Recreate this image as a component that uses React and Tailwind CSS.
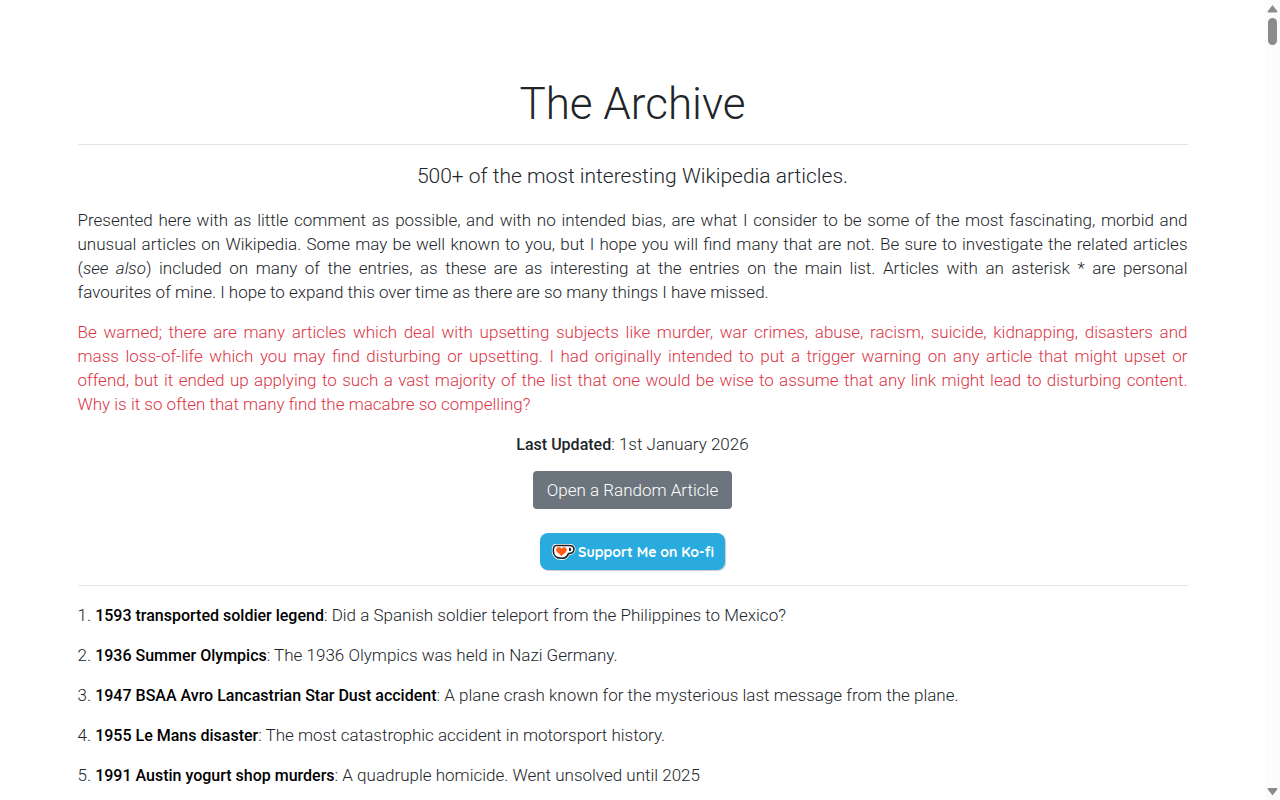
const articles = [
  { title: '1593 transported soldier legend', note: 'Did a Spanish soldier teleport from the Philippines to Mexico?' },
  { title: '1936 Summer Olympics', note: 'The 1936 Olympics was held in Nazi Germany.' },
  { title: '1947 BSAA Avro Lancastrian Star Dust accident', note: 'A plane crash known for the mysterious last message from the plane.' },
  { title: '1955 Le Mans disaster', note: 'The most catastrophic accident in motorsport history.' },
  { title: '1991 Austin yogurt shop murders', note: 'A quadruple homicide. Went unsolved until 2025' },
];

function KofiCup() {
  return (
    <svg viewBox="0 0 25 18" className="h-[18px] w-[25px]" aria-hidden="true">
      <path
        d="M4.500 1h14C22 1 24.500 3 24.500 6.200c0 3.400-2.600 5.600-6 5.800-1.400 3-4.200 5-8 5C5 17 .8 13.600.8 8 .8 3.500 1.800 1 4.500 1z"
        fill="#fff"
      />
      <path
        d="M5 2.500h13.200c2.900 0 4.800 1.400 4.800 3.700 0 2.600-2.200 4.300-5.500 4.400-1.100 2.900-3.600 4.700-7 4.700-4.900 0-8.200-2.900-8.200-7.300 0-3.900.6-5.500 2.700-5.500z"
        fill="#fff"
        stroke="#202020"
        strokeWidth="1.600"
      />
      <path d="M18 4.800v3.300c1.500 0 2.300-.6 2.300-1.700 0-1-.8-1.600-2.300-1.600z" fill="#202020" />
      <path
        d="M10.500 13 6.300 9.200C4.700 7.600 5 5.600 6.300 4.800c1.500-.9 3.200-.4 4.200.9 1-1.300 2.700-1.800 4.200-.9 1.300.8 1.600 2.800 0 4.400z"
        fill="#ff5a16"
      />
    </svg>
  );
}

function ScrollTrack() {
  return (
    <div className="flex w-[15px] shrink-0 flex-col items-center bg-[#fcfcfc] py-1" aria-hidden="true">
      <svg viewBox="0 0 11 9" className="h-[9px] w-[11px]">
        <path d="M5.500 1 10.500 7.500Q10.500 8.500 9.500 8.500h-8Q.5 8.500.5 7.500z" fill="#8b8b8b" />
      </svg>
      <div className="mt-[5px] h-[27px] w-[9px] rounded-full bg-[#8b8b8b]" />
      <svg viewBox="0 0 11 9" className="mt-auto h-[9px] w-[11px]">
        <path d="M5.500 8.500.5 2Q.5 1 1.500 1h8Q10.500 1 10.500 2z" fill="#8b8b8b" />
      </svg>
    </div>
  );
}

export default function App() {
  return (
    <div className="flex h-screen overflow-hidden bg-white font-['Roboto_Slab','Roboto',serif] text-[17px]/6 font-light text-[#212529]">
      <main className="min-w-0 flex-1 overflow-hidden">
        <div className="mx-auto max-w-[1140px] px-[15px] pt-20">
          <h1 className="text-center text-[44px]/[48px]">The Archive</h1>
          <hr className="my-4 border-black/10" />
          <p className="mb-4 text-center text-[21px]/[31px]">500+ of the most interesting Wikipedia articles.</p>
          <p className="mb-4 text-justify">
            Presented here with as little comment as possible, and with no intended bias, are what I consider to be some
            of the most fascinating, morbid and unusual articles on Wikipedia. Some may be well known to you, but I hope
            you will find many that are not. Be sure to investigate the related articles (<em>see also</em>) included on
            many of the entries, as these are as interesting at the entries on the main list. Articles with an asterisk *
            are personal favourites&nbsp;of mine. I hope to expand this over time as there are so many things I have
            missed.
          </p>
          <p className="mb-4 text-justify text-[#dc3545]">
            Be warned; there are many articles which deal with upsetting subjects like murder, war crimes, abuse, racism,
            suicide, kidnapping, disasters and mass&nbsp;loss-of-life which you may find disturbing or upsetting. I had
            originally intended to put a trigger warning on any article that might upset or offend,&nbsp;but&nbsp;it
            ended up applying to such a vast majority of the list that one would be wise to assume that any link might
            lead to disturbing content. Why&nbsp;is&nbsp;it&nbsp;so often that many find the macabre so compelling?
          </p>
          <p className="mb-[15px] text-center">
            <strong className="text-base/5 font-medium">Last Updated</strong>: 1st January 2026
          </p>
          <div className="flex flex-col items-center gap-6">
            <button type="button" className="rounded-sm bg-[#6c757d] px-3.5 py-[7px] text-white">
              Open a Random Article
            </button>
            <a
              href="#kofi"
              className="flex h-[37px] items-center gap-[2px] rounded-lg bg-[#29abe0] px-[11px] font-['Quicksand','Lato',sans-serif] text-sm font-bold text-white shadow-[1px_1px_1px_rgba(0,0,0,0.2)]"
            >
              <KofiCup />
              Support Me on Ko-fi
            </a>
          </div>
          <hr className="mt-[15px] mb-[17px] border-black/10" />
          <ol className="flex flex-col gap-4">
            {articles.map((article, i) => (
              <li key={article.title}>
                {i + 1}.{' '}
                <a href="#article" className="text-base/5 font-medium text-black">
                  {article.title}
                </a>
                : {article.note}
              </li>
            ))}
          </ol>
        </div>
      </main>
      <ScrollTrack />
    </div>
  );
}
